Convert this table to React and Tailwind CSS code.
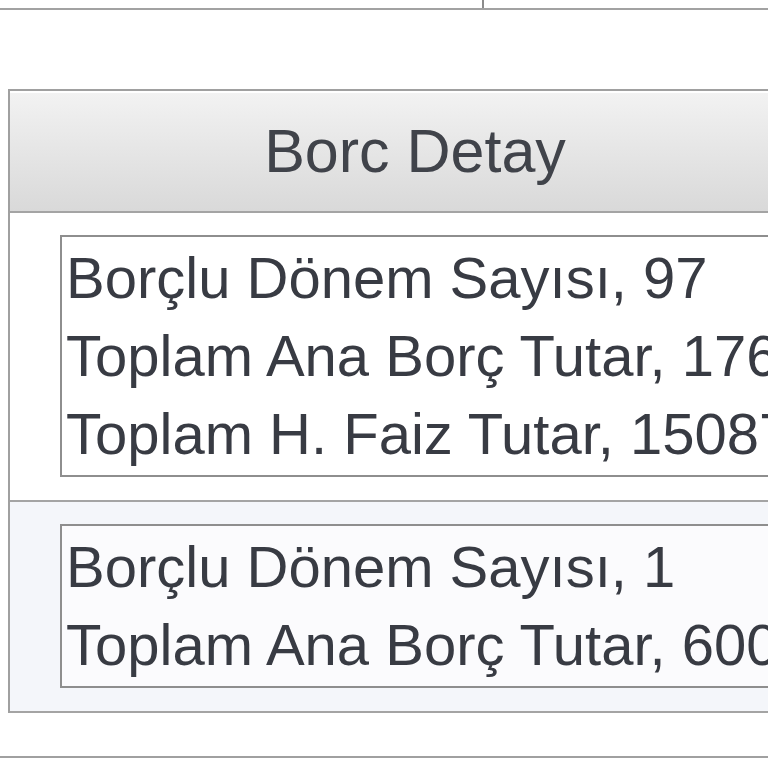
const rows = [
  {
    bg: "bg-white",
    lines: ["Borçlu Dönem Sayısı, 97", "Toplam Ana Borç Tutar, 17654,20", "Toplam H. Faiz Tutar, 15087,45"],
  },
  {
    bg: "bg-[#f4f6fa]",
    lines: ["Borçlu Dönem Sayısı, 1", "Toplam Ana Borç Tutar, 600,00"],
  },
];

export default function App() {
  return (
    <div className="w-[768px] h-[768px] bg-white overflow-hidden font-['Liberation_Sans',Arial,sans-serif] text-[#383b43]">
      {/* upper table edge */}
      <div className="flex h-[10px] border-b-2 border-[#a2a2a2]">
        <div className="w-[484px] border-r-2 border-[#8c8c8c]" />
      </div>

      <div className="h-[79px]" />

      {/* Borc Detay table */}
      <div className="ml-[8px] w-[812px] border-l-2 border-t-2 border-[#a0a0a0]">
        <div className="h-[122px] flex items-center justify-center border-b-2 border-[#a4a4a4] border-t-2 border-t-white bg-gradient-to-b from-[#f2f2f2] to-[#d9d9d9]">
          <span className="text-[61px] leading-none text-[#40434a] pb-[2px]">Borc Detay</span>
        </div>

        {rows.map((row, i) => (
          <div key={i} className={`${row.bg} border-b-2 border-[#a4a4a4] pl-[50px] pt-[22px] pb-[23px]`}>
            <div className="border-2 border-[#8e8e8e] pl-[4px] pt-[2px] pb-[2px] bg-white/60">
              {row.lines.map((line) => (
                <div key={line} className="text-[58px] leading-[78px] whitespace-nowrap">
                  {line}
                </div>
              ))}
            </div>
          </div>
        ))}
      </div>

      <div className="h-[43px]" />
      <div className="border-t-2 border-[#a0a0a0]" />
    </div>
  );
}
